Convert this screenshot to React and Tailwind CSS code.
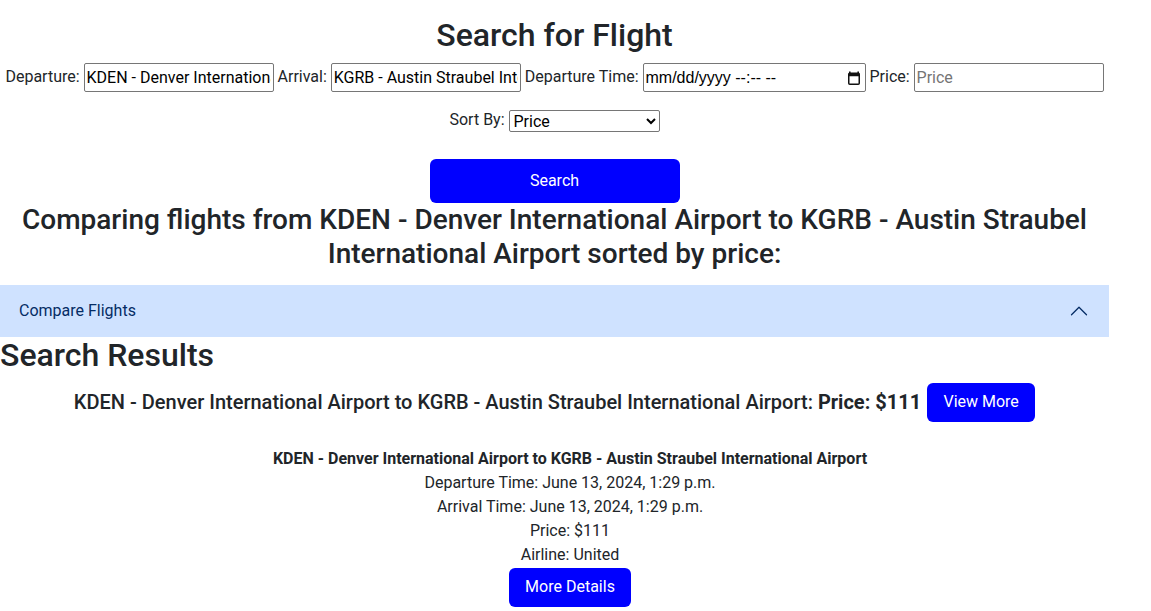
import React from "react";

function CalendarIcon() {
  return (
    <svg width="12" height="14" viewBox="0 0 12 14" className="shrink-0">
      <rect x="1" y="0.5" width="1.6" height="2.5" fill="#111" />
      <rect x="9.4" y="0.5" width="1.6" height="2.5" fill="#111" />
      <rect x="0.75" y="2.25" width="10.5" height="11" rx="1" fill="none" stroke="#111" strokeWidth="1.5" />
      <rect x="0.75" y="2.25" width="10.5" height="3" fill="#111" />
    </svg>
  );
}

export default function App() {
  return (
    <div className="w-[1109px] text-[#212529] text-[16px] leading-[1.5]" style={{ fontFamily: "Roboto, 'Liberation Sans', sans-serif" }}>
      <div className="text-center">
        <h1 className="pt-[16px] mb-[9px] text-[32px] font-medium leading-[1.2]">Search for Flight</h1>
        <form className="text-center">
          <div>
            <label>Departure: </label>
            <input
              className="w-[190px] h-[29px] border border-[#767676] rounded-[2px] px-[2px] text-black align-middle"
              defaultValue="KDEN - Denver International Airport"
            />{" "}
            <label>Arrival: </label>
            <input
              className="w-[190px] h-[29px] border border-[#767676] rounded-[2px] px-[2px] text-black align-middle"
              defaultValue="KGRB - Austin Straubel International Airport"
            />{" "}
            <label>Departure Time: </label>
            <span className="inline-flex items-center justify-between w-[223px] h-[29px] border border-[#767676] rounded-[2px] pl-[2px] pr-[5px] text-black align-middle text-left">
              <span style={{ fontFamily: "'Liberation Sans', Arial, sans-serif" }}>mm/dd/yyyy --:-- --</span>
              <CalendarIcon />
            </span>{" "}
            <label>Price: </label>
            <input
              className="w-[190px] h-[29px] border border-[#767676] rounded-[2px] px-[2px] text-black align-middle placeholder:text-[#757575]"
              placeholder="Price"
            />
          </div>
          <div className="mt-[16px]">
            <label>Sort By: </label>
            <select className="w-[151px] h-[22px] border border-[#767676] rounded-[2px] text-black align-middle">
              <option>Price</option>
              <option>Departure Time</option>
            </select>
          </div>
          <button type="button" className="mt-[27px] w-[250px] h-[44px] bg-[#0000ff] text-white rounded-[6px]">
            Search
          </button>
        </form>
        <h3 className="mb-[14px] text-[28px] font-medium leading-[1.2]">
          Comparing flights from KDEN - Denver International Airport to KGRB - Austin Straubel International Airport sorted by price:
        </h3>
      </div>

      <div className="h-[52px] bg-[#cfe2ff] flex items-center justify-between px-[20px] text-[#052c65]">
        <span className="-ml-[1px]">Compare Flights</span>
        <svg width="20" height="20" viewBox="0 0 16 16" fill="none" stroke="#052c65" strokeLinecap="round" strokeLinejoin="round">
          <path d="M2 11L8 5L14 11" />
        </svg>
      </div>

      <h2 className="-mt-[1px] text-[32px] font-medium leading-[1.2]">Search Results</h2>

      <div className="text-center mt-[9px]">
        <div className="flex items-center justify-center gap-[6px]">
          <span className="text-[20px] font-medium">
            KDEN - Denver International Airport to KGRB - Austin Straubel International Airport: <b className="font-bold">Price: $111</b>
          </span>
          <button type="button" className="w-[108px] h-[39px] bg-[#0000ff] text-white rounded-[6px]">
            View More
          </button>
        </div>
        <div className="mt-[25px] pl-[31px]">
          <div className="font-bold">KDEN - Denver International Airport to KGRB - Austin Straubel International Airport</div>
          <div>Departure Time: June 13, 2024, 1:29 p.m.</div>
          <div>Arrival Time: June 13, 2024, 1:29 p.m.</div>
          <div>Price: $111</div>
          <div>Airline: United</div>
          <button type="button" className="mt-[1px] w-[122px] h-[39px] bg-[#0000ff] text-white rounded-[6px]">
            More Details
          </button>
        </div>
      </div>
    </div>
  );
}
